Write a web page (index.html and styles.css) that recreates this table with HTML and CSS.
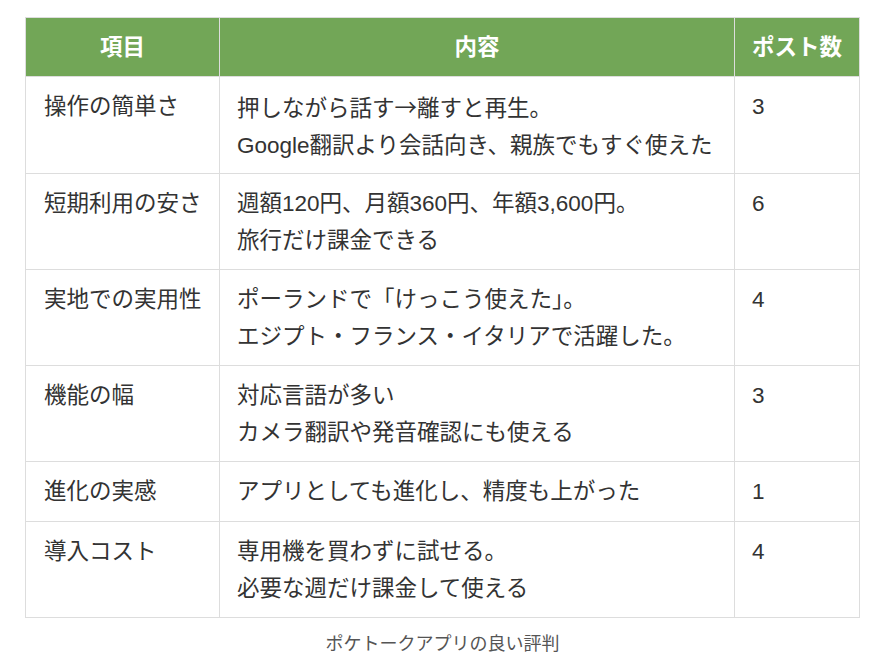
FILE: index.html
```html
<!DOCTYPE html>
<html lang="ja">
<head>
<meta charset="utf-8">
<link rel="stylesheet" href="styles.css">
</head>
<body>
<figure class="wrap">
  <table class="review">
    <colgroup>
      <col class="c1"><col class="c2"><col class="c3">
    </colgroup>
    <thead>
      <tr class="head"><th>項目</th><th>内容</th><th>ポスト数</th></tr>
    </thead>
    <tbody>
      <tr class="two first"><td>操作の簡単さ</td><td>押しながら話す<span class="arrow">→</span>離すと再生。<br>Google翻訳より会話向き、親族でもすぐ使えた</td><td>3</td></tr>
      <tr class="two"><td>短期利用の安さ</td><td>週額120円、月額360円、年額3,600円。<br>旅行だけ課金できる</td><td>6</td></tr>
      <tr class="two"><td>実地での実用性</td><td>ポーランドで「けっこう使えた」。<br>エジプト・フランス・イタリアで活躍した。</td><td>4</td></tr>
      <tr class="two"><td>機能の幅</td><td>対応言語が多い<br>カメラ翻訳や発音確認にも使える</td><td>3</td></tr>
      <tr class="one"><td>進化の実感</td><td>アプリとしても進化し、精度も上がった</td><td>1</td></tr>
      <tr class="two"><td>導入コスト</td><td>専用機を買わずに試せる。<br>必要な週だけ課金して使える</td><td>4</td></tr>
    </tbody>
  </table>
  <figcaption class="caption">ポケトークアプリの良い評判</figcaption>
</figure>
</body>
</html>
```

FILE: styles.css
```css
html, body {
  margin: 0;
  padding: 0;
  background: #ffffff;
}
body {
  font-family: "Liberation Sans", "Noto Sans CJK JP", sans-serif;
  color: #333333;
}
.wrap {
  margin: 17px 26px 0 25px;
  padding: 0;
}
.review {
  width: 100%;
  border-collapse: collapse;
  table-layout: fixed;
  font-size: 22.5px;
  line-height: 37px;
}
.c1 { width: 194px; }
.c2 { width: 515px; }
.c3 { width: auto; }
.review th,
.review td {
  border: 1px solid #dddddd;
  padding: 11px 17px 8px 17px;
  vertical-align: top;
  text-align: left;
}
.review td:first-child {
  padding-left: 18px;
}
.review th {
  background: #72a657;
  color: #ffffff;
  font-weight: bold;
  text-align: center;
  padding-left: 10px;
  padding-right: 10px;
}
.head { height: 59px; }
.two { height: 96px; }
.two.first { height: 97px; }
.one { height: 60px; }
.arrow {
  font-family: "Noto Sans CJK JP", sans-serif;
}
.caption {
  margin: 0;
  padding-top: 13px;
  text-align: center;
  font-size: 18px;
  line-height: 27px;
  color: #555555;
}
```
